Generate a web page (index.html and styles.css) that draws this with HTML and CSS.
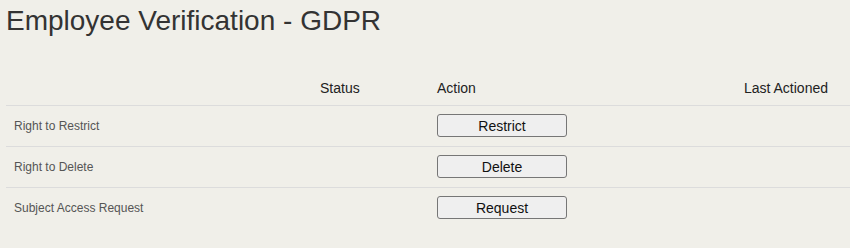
FILE: index.html
```html
<!DOCTYPE html>
<html>
<head>
<meta charset="utf-8">
<link rel="stylesheet" href="styles.css">
</head>
<body>
<div class="page">
  <h1 class="title">Employee Verification - GDPR</h1>
  <div class="table">
    <div class="row head">
      <div class="cell"></div>
      <div class="cell">Status</div>
      <div class="cell">Action</div>
      <div class="cell last">Last Actioned</div>
    </div>
    <div class="row">
      <div class="cell label">Right to Restrict</div>
      <div class="cell"></div>
      <div class="cell"><button class="btn">Restrict</button></div>
      <div class="cell last"></div>
    </div>
    <div class="row">
      <div class="cell label">Right to Delete</div>
      <div class="cell"></div>
      <div class="cell"><button class="btn">Delete</button></div>
      <div class="cell last"></div>
    </div>
    <div class="row">
      <div class="cell label">Subject Access Request</div>
      <div class="cell"></div>
      <div class="cell"><button class="btn">Request</button></div>
      <div class="cell last"></div>
    </div>
  </div>
</div>
</body>
</html>
```
FILE: styles.css
```css
html, body {
  margin: 0;
  padding: 0;
  background: #f0efe9;
  font-family: "Liberation Sans", Arial, sans-serif;
}
.page {
  padding: 4.5px 0 0 6px;
}
.title {
  margin: 0 0 35.5px 0;
  font-size: 28px;
  line-height: 32px;
  font-weight: normal;
  color: #333;
}
.table {
  display: flex;
  flex-direction: column;
}
.row {
  display: grid;
  grid-template-columns: 306px 117px 1fr auto;
  align-items: center;
  height: 40px;
  border-top: 1px solid #dcdcdc;
}
.row.head {
  border-top: none;
  height: auto;
  padding: 8.4px 0 8.6px 0;
  font-size: 14px;
  line-height: 16px;
  color: #222;
}
.cell {
  padding: 0 8px;
}
.cell.last {
  padding-right: 22px;
  text-align: right;
}
.label {
  font-size: 12px;
  line-height: 14px;
  color: #555;
}
.btn {
  display: block;
  box-sizing: border-box;
  width: 130px;
  height: 23px;
  padding: 0;
  margin: 0;
  font-family: "Liberation Sans", Arial, sans-serif;
  font-size: 14px;
  color: #111;
  background: #efefef;
  border: 1px solid #767676;
  border-radius: 3px;
}
```
